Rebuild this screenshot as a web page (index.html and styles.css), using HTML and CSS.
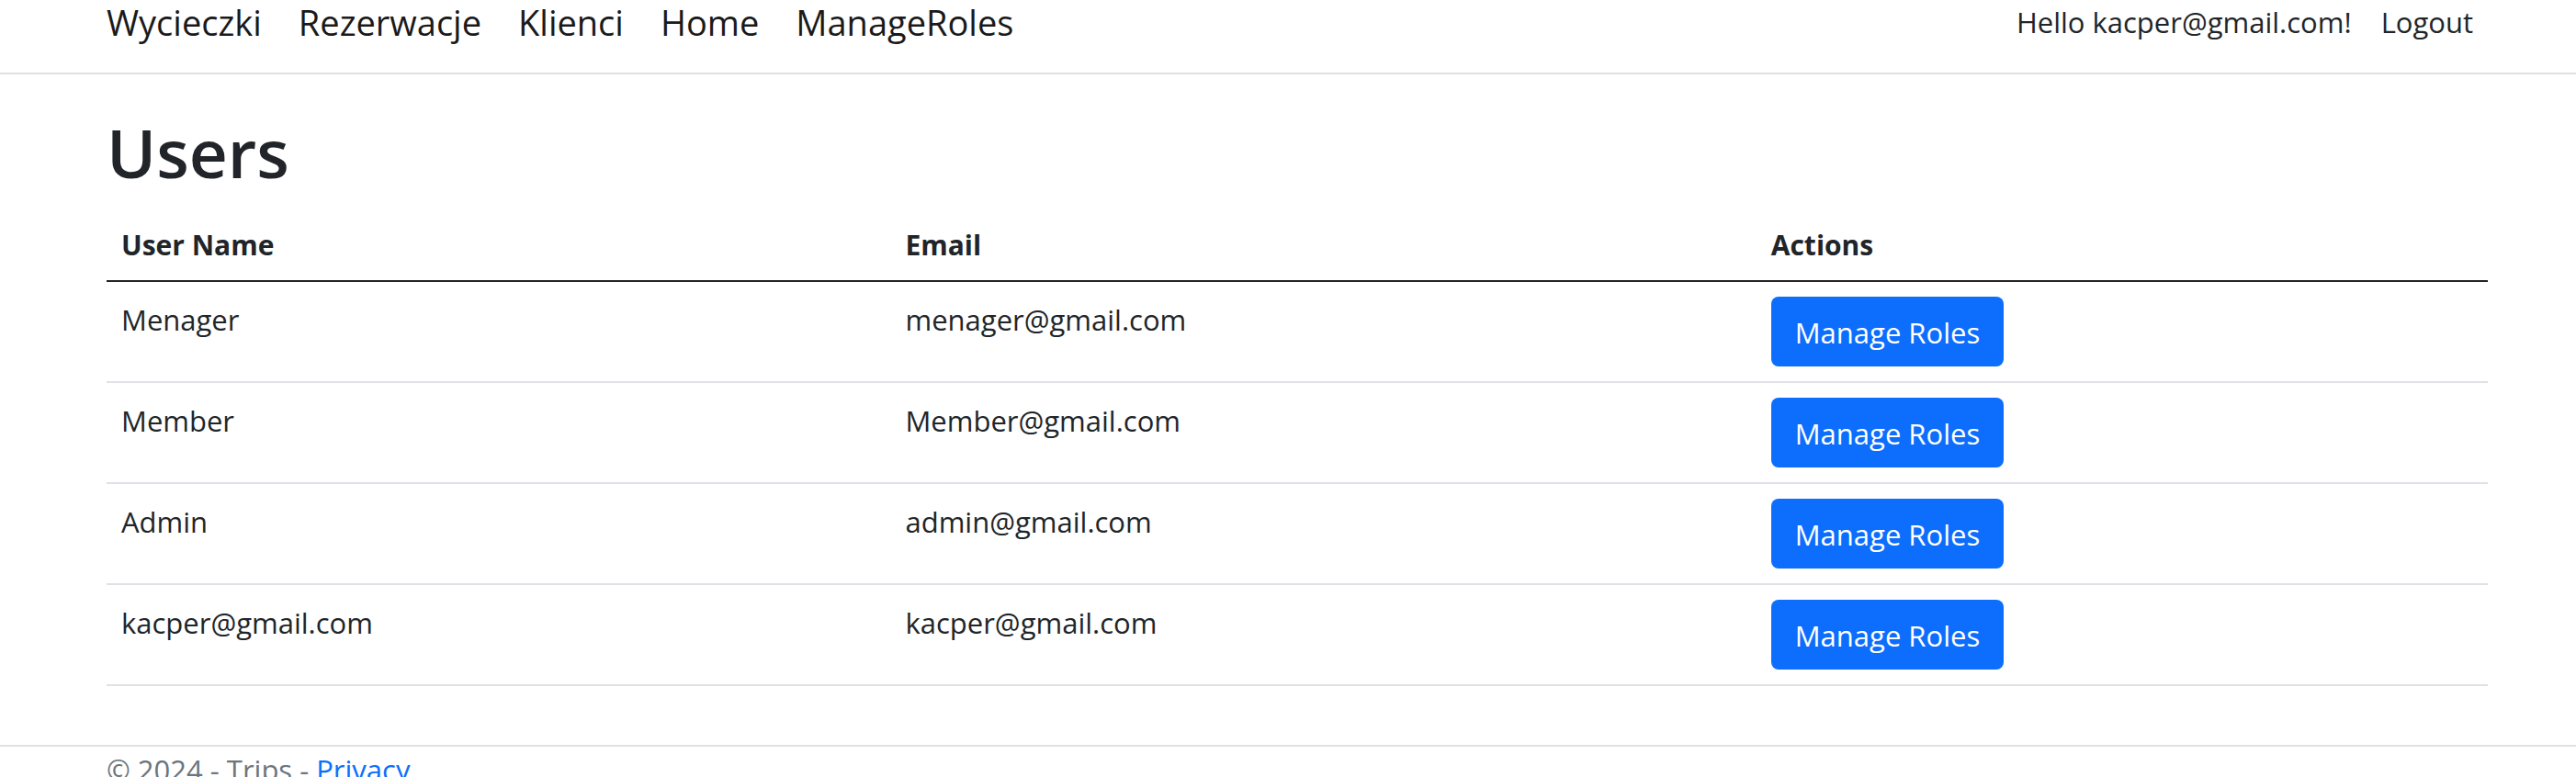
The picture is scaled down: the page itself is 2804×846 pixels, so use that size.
FILE: index.html
```html
<!DOCTYPE html>
<html lang="pl">
<head>
<meta charset="utf-8">
<title>Users - Trips</title>
<link rel="stylesheet" href="styles.css">
</head>
<body>
<header class="site-header">
  <nav class="navbar">
    <ul class="nav-main">
      <li><a href="#">Wycieczki</a></li>
      <li><a href="#">Rezerwacje</a></li>
      <li><a href="#">Klienci</a></li>
      <li><a href="#">Home</a></li>
      <li><a href="#">ManageRoles</a></li>
    </ul>
    <ul class="nav-account">
      <li><a href="#">Hello kacper@gmail.com!</a></li>
      <li><button type="submit" class="logout">Logout</button></li>
    </ul>
  </nav>
</header>
<main class="content">
  <h1 class="title">Users</h1>
  <table class="users">
    <thead>
      <tr><th scope="col">User Name</th><th scope="col">Email</th><th scope="col">Actions</th></tr>
    </thead>
    <tbody>
      <tr><td>Menager</td><td>menager@gmail.com</td><td><a class="btn" href="#">Manage Roles</a></td></tr>
      <tr><td>Member</td><td>Member@gmail.com</td><td><a class="btn" href="#">Manage Roles</a></td></tr>
      <tr><td>Admin</td><td>admin@gmail.com</td><td><a class="btn" href="#">Manage Roles</a></td></tr>
      <tr><td>kacper@gmail.com</td><td>kacper@gmail.com</td><td><a class="btn" href="#">Manage Roles</a></td></tr>
    </tbody>
  </table>
</main>
<footer class="site-footer">© 2024 - Trips - <a href="#">Privacy</a></footer>
</body>
</html>
```
FILE: styles.css
```css
* {
  box-sizing: border-box;
}

html {
  overflow: hidden;
}

body {
  margin: 0;
  background: #fff;
  color: #212529;
  font-family: "Segoe UI", "Open Sans", "Noto Sans", sans-serif;
  font-size: 31px;
  line-height: 50px;
}

.site-header {
  border-bottom: 2px solid #dee2e6;
}

.navbar {
  display: flex;
  justify-content: space-between;
  align-items: center;
  padding: 0 112px 31px 116px;
  line-height: 48px;
}

.nav-main,
.nav-account {
  display: flex;
  margin: 0;
  padding: 0;
  list-style: none;
}

.nav-main {
  gap: 40px;
  font-size: 38px;
}

.nav-account {
  gap: 32px;
}

.nav-main a {
  color: #1a1a1a;
  text-decoration: none;
}

.nav-account a,
.logout {
  padding: 0;
  border: 0;
  background: none;
  color: #212529;
  font: inherit;
  text-decoration: none;
}

.content {
  padding: 38px 96px 64px 116px;
}

.title {
  margin: 0 0 18px;
  font-size: 73px;
  font-weight: 600;
  line-height: 94px;
}

.users {
  width: 100%;
  border-collapse: separate;
  border-spacing: 0;
}

.users th,
.users td {
  padding: 16px;
  border-bottom: 2px solid #dee2e6;
  text-align: left;
  vertical-align: top;
}

.users th {
  padding: 11px 16px 13px;
  border-bottom-color: #212529;
  font-size: 30px;
  font-weight: 700;
}

.btn {
  display: block;
  width: fit-content;
  padding: 14px 26px 12px;
  border-radius: 8px;
  background: #0d6efd;
  color: #fff;
  text-decoration: none;
}

.site-footer {
  padding: 0 96px 0 116px;
  border-top: 2px solid #dee2e6;
  color: #6c757d;
}

.site-footer a {
  color: #0d6efd;
  text-decoration: none;
}
```
